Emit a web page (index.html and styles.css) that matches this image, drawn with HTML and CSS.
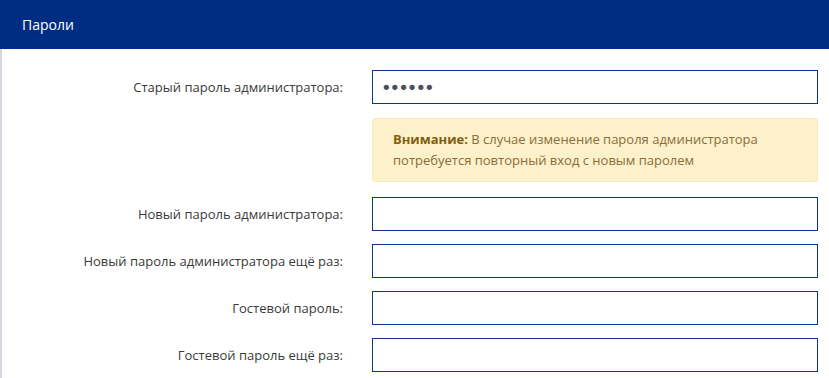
FILE: index.html
```html
<!DOCTYPE html>
<html lang="ru">
<head>
    <meta charset="UTF-8">
    <meta name="viewport" content="width=device-width, initial-scale=1.0">
    <title>Пароли</title>
    <link rel="stylesheet" href="styles.css">
</head>
<body>
    <div class="panel">
        <div class="panel-title">Пароли</div>
        <form class="passwords" action="#">
            <label for="old">Старый пароль администратора:</label>
            <input type="password" id="old" value="123456">

            <div class="alert">
                <b>Внимание:</b> В случае изменение пароля администратора потребуется повторный вход с новым паролем
            </div>

            <label for="new1">Новый пароль администратора:</label>
            <input type="password" id="new1">

            <label for="new2">Новый пароль администратора ещё раз:</label>
            <input type="password" id="new2">

            <label for="guest1">Гостевой пароль:</label>
            <input type="password" id="guest1">

            <label for="guest2">Гостевой пароль ещё раз:</label>
            <input type="password" id="guest2">
        </form>
    </div>
</body>
</html>
```

FILE: styles.css
```css
* {
    box-sizing: border-box;
}

body {
    margin: 0;
    background-color: #fff;
    font-family: "Open Sans", "Noto Sans", sans-serif;
    font-size: 13px;
    color: #333;
}

.panel-title {
    height: 49px;
    line-height: 49px;
    padding-left: 22px;
    background-color: #002d84;
    color: #fff;
    font-size: 14px;
}

.passwords {
    display: grid;
    grid-template-columns: 341px 446px;
    column-gap: 29px;
    row-gap: 13px;
    align-items: center;
    align-content: start;
    min-height: 329px;
    padding-top: 21px;
    border-left: 2px solid #d3d8e0;
}

.passwords label {
    text-align: right;
    color: #3a3a3a;
}

.passwords input {
    height: 34px;
    border: 1px solid #0a3589;
    padding: 0 8px;
    outline: none;
    font-family: "DejaVu Sans", sans-serif;
    font-size: 18px;
    color: #4a505a;
    letter-spacing: -2px;
}

.alert {
    grid-column: 2;
    margin: 1px 0 2px;
    padding: 10px 20px;
    background-color: #fdf1cb;
    border: 1px solid #fbe9b8;
    border-radius: 3px;
    color: #8a6d3b;
    line-height: 21px;
}

.alert b {
    color: #80600f;
}
```
